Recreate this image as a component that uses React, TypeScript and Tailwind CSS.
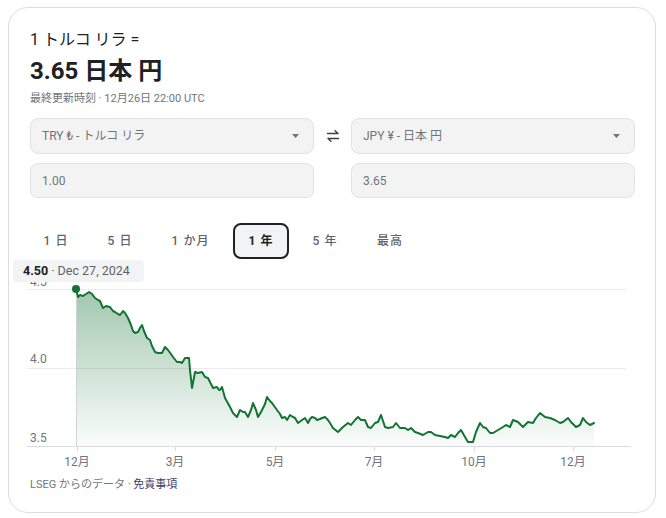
import React from "react";

const pts: [number, number][] = [
  [76,289],[78,297],[80,295],[83,296],[86,294],[89,292],[92,294],[95,298],[98,300],[100,301],[103,308],[106,306],[110,307],[113,311],[115,312],[118,314],[120,315],[123,311],[125,313],[128,318],[131,325],[133,331],[135,333],[138,332],[140,328],[142,325],[144,331],[147,338],[150,340],[152,346],[155,352],[158,353],[162,353],[165,347],[168,350],[171,354],[173,357],[177,362],[180,362],[182,363],[185,358],[189,358],[190,370],[192,388],[195,372],[198,373],[202,372],[205,377],[208,378],[211,384],[213,388],[217,387],[219,390],[220,390],[222,387],[225,398],[230,407],[233,413],[237,417],[240,410],[243,412],[245,412],[248,417],[251,410],[253,403],[256,410],[258,417],[261,412],[263,408],[265,404],[267,397],[270,401],[272,403],[277,410],[280,414],[282,418],[285,417],[287,420],[290,415],[293,417],[295,418],[298,423],[302,420],[305,418],[308,423],[310,419],[312,417],[315,418],[317,420],[320,419],[322,418],[325,417],[328,420],[330,423],[333,428],[338,432],[343,427],[348,423],[351,425],[355,420],[358,417],[361,420],[365,420],[368,427],[371,428],[375,423],[378,422],[381,415],[385,427],[388,428],[393,427],[396,423],[400,428],[405,428],[408,430],[411,428],[415,432],[418,433],[423,435],[428,432],[431,432],[435,435],[440,436],[445,437],[448,438],[451,435],[455,437],[458,433],[461,430],[465,437],[468,442],[473,442],[476,432],[480,423],[483,427],[486,428],[490,433],[493,433],[498,430],[503,427],[506,425],[510,427],[513,420],[518,422],[523,427],[528,422],[533,423],[536,418],[540,413],[545,417],[550,418],[555,420],[560,423],[563,422],[568,418],[571,422],[576,427],[580,425],[583,418],[586,422],[590,425],[594,423],
];

const linePath = "M" + pts.map((p) => `${p[0]},${p[1]}`).join(" L");
const areaPath = linePath + ` L594,446 L76,446 Z`;

const xLabels: [number, string][] = [
  [77, "12月"],
  [175, "3月"],
  [275, "5月"],
  [374, "7月"],
  [474, "10月"],
  [573, "12月"],
];

const font = { fontFamily: 'Roboto, "Noto Sans CJK JP", sans-serif' };

function Caret() {
  return (
    <svg width="7" height="4" viewBox="0 0 7 4">
      <path d="M0 0 L7 0 L3.5 4 Z" fill="#70757a" />
    </svg>
  );
}

function SelectBox({ label }: { label: string }) {
  return (
    <div className="h-[36px] rounded-[8px] border border-[#e3e3e3] bg-[#f3f3f3] flex items-center justify-between pl-[11px] pr-[14px]">
      <span className="text-[12px] text-[#70757a]">{label}</span>
      <Caret />
    </div>
  );
}

function InputBox({ value }: { value: string }) {
  return (
    <div className="h-[35px] rounded-[8px] border border-[#e3e3e3] bg-[#f3f3f3] flex items-center pl-[11px]">
      <span className="text-[12px] text-[#70757a]">{value}</span>
    </div>
  );
}

const tabs: { label: string; w: string; active?: boolean }[] = [
  { label: "1 日", w: "w-[56px]" },
  { label: "5 日", w: "w-[56px]" },
  { label: "1 か月", w: "w-[69px]" },
  { label: "1 年", w: "w-[56px]", active: true },
  { label: "5 年", w: "w-[56px]" },
  { label: "最高", w: "w-[58px]" },
];

export default function App() {
  return (
    <div className="w-[666px] h-[518px] bg-white pt-[7px] pl-[8px]" style={font}>
      <div className="w-[648px] h-[506px] rounded-[20px] border border-[#dadce0] bg-white pt-[22px] flex flex-col">
        <div className="pl-[21px] pr-[20px]">
          <div className="text-[16px] leading-[20px] text-[#202124]">1 トルコ リラ =</div>
          <div className="mt-[5px] text-[24px] leading-[32px] font-bold text-[#202124]">3.65 日本 円</div>
          <div className="mt-[4px] text-[11px] leading-[16px] text-[#70757a]">最終更新時刻 · 12月26日 22:00 UTC</div>

          <div className="mt-[11px] grid grid-cols-[1fr_37px_1fr] gap-y-[9px]">
            <SelectBox label="TRY ₺ - トルコ リラ" />
            <div className="flex items-center justify-center">
              <svg width="14" height="14" viewBox="0 0 14 14" fill="none" stroke="#3c4043" strokeWidth="1.4" strokeLinecap="round" strokeLinejoin="round">
                <path d="M1.5 4.5 H12 M9 1.8 L12 4.5" />
                <path d="M12.5 9.5 H2 M5 12.2 L2 9.5" />
              </svg>
            </div>
            <SelectBox label="JPY ¥ - 日本 円" />
            <InputBox value="1.00" />
            <div />
            <InputBox value="3.65" />
          </div>

          <div className="mt-[25px] -ml-[2px] flex gap-[8px]">
            {tabs.map((t) => (
              <div
                key={t.label}
                className={
                  t.w +
                  " h-[36px] flex items-center justify-center rounded-[8px] text-[12px] tracking-[1px] " +
                  (t.active
                    ? "border-2 border-[#202124] bg-[#f1f3f4] font-bold text-[#202124]"
                    : "font-medium text-[#5f6368]")
                }
              >
                {t.label}
              </div>
            ))}
          </div>
        </div>

        <div className="relative mt-[3px] h-[210px]">
          <svg width="646" height="210" viewBox="9 262 646 210" className="block">
            <defs>
              <linearGradient id="fillg" x1="0" y1="289" x2="0" y2="446" gradientUnits="userSpaceOnUse">
                <stop offset="0" stopColor="#137333" stopOpacity="0.4" />
                <stop offset="1" stopColor="#137333" stopOpacity="0.02" />
              </linearGradient>
            </defs>
            <line x1="27" y1="289.5" x2="626" y2="289.5" stroke="#ebebeb" strokeWidth="1" />
            <line x1="27" y1="368.5" x2="626" y2="368.5" stroke="#ebebeb" strokeWidth="1" />
            <text x="30" y="286" fontSize="12" fill="#70757a" style={font}>4.5</text>
            <text x="30" y="363" fontSize="12" fill="#70757a" style={font}>4.0</text>
            <text x="30" y="442" fontSize="12" fill="#70757a" style={font}>3.5</text>
            <path d={areaPath} fill="url(#fillg)" />
            <line x1="76.5" y1="289" x2="76.5" y2="446" stroke="#d0d3d6" strokeWidth="1" />
            <line x1="27" y1="446.5" x2="631" y2="446.5" stroke="#dadce0" strokeWidth="1" />
            {xLabels.map(([x, l]) => (
              <g key={x + l}>
                <line x1={x + 0.5} y1="446" x2={x + 0.5} y2="451" stroke="#dadce0" strokeWidth="1" />
                <text x={x} y="466" fontSize="12" fill="#70757a" textAnchor="middle" style={font}>{l}</text>
              </g>
            ))}
            <path d={linePath} fill="none" stroke="#137333" strokeWidth="2" strokeLinejoin="round" strokeLinecap="round" />
            <circle cx="76" cy="289" r="4" fill="#137333" />
          </svg>
          <div className="absolute left-[4px] top-[-2px] h-[22px] w-[131px] rounded-[4px] bg-[#f1f3f4] flex items-center pl-[10px] text-[12.5px] whitespace-nowrap">
            <span className="font-bold text-[#202124]">4.50</span>
            <span className="text-[#5f6368]">&nbsp;· Dec 27, 2024</span>
          </div>
        </div>

        <div className="pl-[21px] mt-[5px] text-[11px] leading-[16px] text-[#70757a]">
          LSEG からのデータ · <span className="text-[#3c3f6e]">免責事項</span>
        </div>
      </div>
    </div>
  );
}
